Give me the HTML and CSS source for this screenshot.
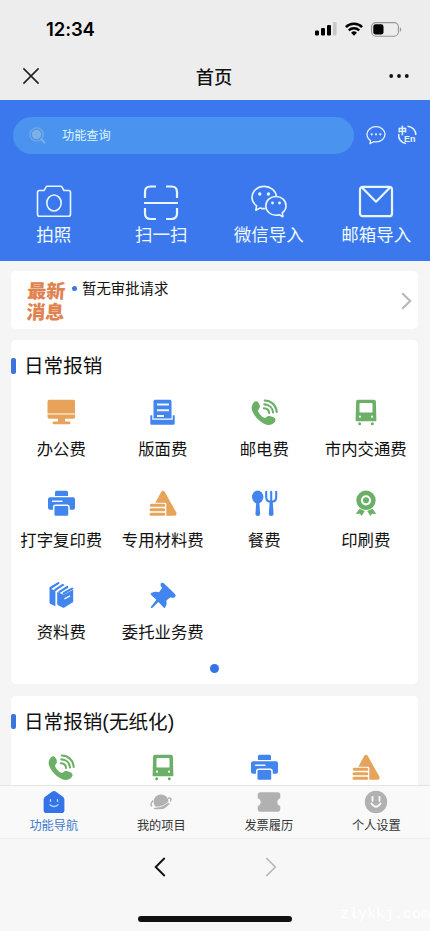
FILE: index.html
```html
<!DOCTYPE html>
<html lang="zh-CN">
<head>
<meta charset="utf-8">
<meta name="viewport" content="width=device-width, initial-scale=1">
<title>首页</title>
<link rel="stylesheet" href="styles.css">
</head>
<body>
<svg class="sprite" aria-hidden="true">
  <symbol id="monitor" viewBox="0 0 28 28"><path d="M2.500.7h23.700q2 0 2 2v11.800H.5V2.700q0-2 2-2zM.5 15.600h27.700v2.200q0 2-2 2h-8.200v2.800h4q1.500 0 1.500 1.300T22 25.200H7q-1.500 0-1.500-1.300T7 22.600h4v-2.800H2.500q-2 0-2-2z"/></symbol>
  <symbol id="document" viewBox="0 0 28 28"><path d="M5.500.7h15.500q1.500 0 1.500 1.500v17.300h-18V2.200q0-1.500 1-1.500z"/><path d="M1.300 16.300h2v4.400h20.400v-4.400h2v8.200q0 1.300-1.300 1.300H2.600q-1.300 0-1.300-1.300z"/><path class="cut" d="M8 5.600h12M8 11.200h12M8 17h7"/></symbol>
  <symbol id="phone" viewBox="0 0 28 28"><path d="M3.300 4.200C4.700 2.100 7 1.700 8.300 3.400c1.500 2 2.100 4.300 1.200 5.800-.6 1-1.600 1.500-1.400 2.700.5 2.400 4 6.200 6.400 7 1.300.4 1.800-.9 3.100-1.600 2-1 5.200.3 7 1.800 1.500 1.200 1.100 3-.2 4.400-2.400 2.600-6.100 3.200-10.200 1.200C8.700 22 3.900 16.800 2 11.300 1.200 8.700 1.800 6.200 3.300 4.200z"/><path class="wave" d="M14.700 1.500c6.300 0 11.500 4.500 12 11.500M14.300 5.400c4.800.1 8.300 3.300 8.700 8M13.900 9.300c3 .2 5 1.900 5.200 4.700"/></symbol>
  <symbol id="tram" viewBox="0 0 28 28"><path fill-rule="evenodd" d="M6 .7h16q1.800 0 1.900 2l.5 18.800q0 .7-.7.7H4.300q-.7 0-.7-.7L4.100 2.700Q4.200.7 6 .7zM8.200 4q-.7 0-.7.700v8.200q0 .7.700.7h11.600q.7 0 .7-.7V4.700q0-.7-.7-.7zM8 16.600a1.100 1.100 0 1 0 0 2.200 1.100 1.100 0 0 0 0-2.200zM20 16.600a1.100 1.100 0 1 0 0 2.200 1.100 1.100 0 0 0 0-2.200z"/><circle cx="7.700" cy="24.700" r="1.500"/><circle cx="20.300" cy="24.700" r="1.500"/></symbol>
  <symbol id="printer" viewBox="0 0 28 28"><path d="M9.500.7h10q1.500 0 1.500 1.500v3.900H8V2.200Q8 .7 9.500.7zM3 7.200h23q2 0 2 2v8.600q0 2-2 2H3q-2 0-2-2V9.200q0-2 2-2z"/><path class="cut thin" d="M5.500 11.200h9.500"/><rect class="outline" x="6.700" y="15.300" width="15.300" height="11.300" rx="2"/></symbol>
  <symbol id="materials" viewBox="0 0 28 28"><path d="M12.300 1.800q1.700-2.300 3.400 0L27.300 22.600q1 3.200-1.700 3.200H17.300V14q0-1.300-1.200-1.300H6.300z"/><path class="plain" d="M2.300 15.300h12.500M2 19.800h12.800M2 24.300h12.800"/></symbol>
  <symbol id="cutlery" viewBox="0 0 28 28"><ellipse cx="7.700" cy="7" rx="5.700" ry="6.500"/><path d="M6.300 12h3l.9 12q0 2-2.400 2t-2.400-2z"/><path class="wave" d="M16.200 1.700v5.500q0 4.500 5 4.500t5-4.500V1.700M21.200 1.700v10"/><path d="M19.700 11h3l.9 13q0 2-2.400 2t-2.400-2z"/></symbol>
  <symbol id="medal" viewBox="0 0 28 28"><circle class="ring" cx="14" cy="10.300" r="7.400"/><circle cx="14" cy="10.300" r="3"/><path d="m7.500 18.700 5.300 2.300-3.200 5-1.600-2.300-4.300.4zM20.500 18.700 15.200 21l3.200 5 1.600-2.300 4.300.4z"/></symbol>
  <symbol id="books" viewBox="0 0 28 28"><path d="m2.500 6.300 5.900 2.500v15.400L3.500 22q-1-.5-1-1.500z"/><path d="M10.200 9.900 15.500 12.200q1 .4 2 0l8.700-4.500V20l-8.800 5.400q-1 .5-2 .1l-4.300-2.200q-.9-.4-.9-1.400z"/><path class="plain slim" d="m3.500 6 7.800-4.900M8.300 7.800l7.500-4.900M12.500 9.900l7.800-4.900M16.700 11.300l8.400-4.700"/><path class="cut thin" d="m17.800 16.600 4.800-2.500"/></symbol>
  <symbol id="pin" viewBox="0 0 28 28"><path d="M11.700 1.500q1.800-1.500 3.400 0L26 11.900q1.500 2-.1 3.300-1.800 1.200-4.500.1l-4 3.300q1 3.900-1.200 7-.7.700-1.600-.2l-5.200-5.300-6 5.700q-1.500.8-1.700-.8l5.700-7.300-5.300-4.800q-.8-1.100.1-1.900 4.300-1.900 7.800-.8l3-4.300q-2.200-2.600-1.300-4.400z"/></symbol>
</svg>
<div class="phone">
  <header class="top">
    <div class="status">
      <span class="time">12:34</span>
      <span class="indicators">
        <svg width="22" height="14" viewBox="0 0 22 14"><rect x="0" y="8.500" width="4" height="5" rx="1.200"/><rect x="6" y="6" width="4" height="7.500" rx="1.200"/><rect x="12" y="3" width="4" height="10.500" rx="1.200"/><rect x="18" y="0" width="3.600" height="13.500" rx="1.200" fill="#c8c8c8"/></svg>
        <svg width="18" height="14" viewBox="0 0 18 14" fill="none" stroke="#000" stroke-width="2.500"><path d="M.9 5.200a11.500 11.500 0 0 1 16.200 0M3.800 8.300a7.400 7.400 0 0 1 10.400 0"/><path d="M6.100 10.800a4.100 4.100 0 0 1 5.800 0L9 13.700z" fill="#000" stroke="none"/></svg>
        <svg width="31" height="15" viewBox="0 0 31 15"><rect x=".6" y=".6" width="26.800" height="13.600" rx="4.200" fill="none" stroke="#969696" stroke-width="1.100"/><rect x="2.300" y="2.300" width="10.200" height="10.200" rx="2.300"/><path d="M28.800 5v5q1.400-.8 1.400-2.500T28.800 5z" fill="#999"/></svg>
      </span>
    </div>
    <div class="nav">
      <svg width="16" height="16" viewBox="0 0 16 16" fill="none" stroke="#222" stroke-width="1.600" stroke-linecap="round"><path d="m.9.9 14.200 14.200M15.100.9.900 15.100"/></svg>
      <h1>首页</h1>
      <svg width="20" height="4" viewBox="0 0 20 4" fill="#111"><circle cx="2.200" cy="2" r="1.900"/><circle cx="10" cy="2" r="1.900"/><circle cx="17.800" cy="2" r="1.900"/></svg>
    </div>
  </header>

  <section class="hero">
    <div class="search-row">
      <div class="search">
        <svg width="17" height="17" viewBox="0 0 17 17"><circle cx="7.500" cy="7.500" r="6.600" fill="none" stroke="#6ea7e9" stroke-width="1.400"/><circle cx="7.500" cy="7.500" r="4.700" fill="#80b1e5"/><path d="m12.500 12.500 3 3" stroke="#80b1e5" stroke-width="1.800" stroke-linecap="round"/></svg>
        <span>功能查询</span>
      </div>
      <svg class="chat" width="20" height="20" viewBox="0 0 20 20" fill="none" stroke="#e4f4ff" stroke-width="1.300"><path d="M4.500 15.500C2.200 14 1 11.800 1 9.300 1 5 5 1.700 10 1.700s9 3.300 9 7.600-4 7.600-9 7.600q-1.300 0-2.400-.2L4 18.600z" stroke-linejoin="round"/><g fill="#e4f4ff" stroke="none"><circle cx="5.700" cy="9.300" r="1.100"/><circle cx="10" cy="9.300" r="1.100"/><circle cx="14.300" cy="9.300" r="1.100"/></g></svg>
      <svg class="lang" width="20" height="20" viewBox="0 0 20 20"><path d="M10.500 1.200c5 .3 8.500 4.200 8.300 8.800M1.700 9c-.6 4.600 2.300 8.900 7.300 9.500" fill="none" stroke="#e4f4ff" stroke-width="1.500"/><text x=".8" y="8.600" font-size="9" font-weight="900">中</text><text class="en" x="7" y="17.300" font-size="9" font-weight="700">En</text></svg>
    </div>
    <div class="actions">
      <div class="action"><svg width="36" height="36" viewBox="0 0 36 36"><path d="M3.500 5.500H8l2.200-3.700q.4-.6 1.200-.6h13.200q.8 0 1.200.6L28 5.500h4.500q2 0 2 2v21.800q0 2-2 2h-29q-2 0-2-2V7.500q0-2 2-2z"/><ellipse cx="18" cy="18" rx="7.200" ry="8"/></svg><span>拍照</span></div>
      <div class="action"><svg class="scan" width="36" height="36" viewBox="0 0 36 36"><path d="M2 13V7q0-5.500 5.500-5.500H13M23 1.500h5.500Q34 1.500 34 7v6M2 23v5.500Q2 34 7.500 34H13M23 34h5.500q5.500 0 5.500-5.500V23M1 18h34"/></svg><span>扫一扫</span></div>
      <div class="action"><svg width="36" height="36" viewBox="0 0 36 36"><path d="M14.500 23.600q-2.900.3-5.200-.7L4.800 25.200l.8-4.400C2.700 18.700 1 16 1 12.800 1 6.300 6.300 1.400 13.300 1.400c6.200 0 11.200 4 12.100 9.800"/><path d="M25 11.500c5.700 0 10 4.100 10 9.200 0 3.100-1.300 5.400-3.700 7l.6 4-3.600-1.900q-1.600.5-3.300.5c-5.700 0-10.200-4.200-10.200-9.500s4.500-9.300 10.200-9.300z"/><g class="eyes"><circle cx="8.800" cy="9" r="1.700"/><circle cx="17.400" cy="9" r="1.700"/><circle cx="21.500" cy="18" r="1.400"/><circle cx="28.500" cy="18" r="1.400"/></g></svg><span>微信导入</span></div>
      <div class="action"><svg class="mail" width="36" height="36" viewBox="0 0 36 36"><rect x="2" y="1.800" width="32" height="29.400" rx="2.800"/><path d="m4 2.500 14 14.200L32 2.500"/></svg><span>邮箱导入</span></div>
    </div>
  </section>

  <main class="content">
    <section class="card news">
      <div class="badge">最新<br>消息</div>
      <i class="bullet"></i>
      <p>暂无审批请求</p>
      <svg class="more" width="11" height="18" viewBox="0 0 11 18" fill="none" stroke="#b9b9b9" stroke-width="2.200"><path d="m1.200 1.200 8 7.800-8 7.800"/></svg>
    </section>

    <section class="card daily">
      <h2>日常报销</h2>
      <div class="grid">
        <div class="item orange"><svg><use href="#monitor"/></svg><span>办公费</span></div>
        <div class="item blue"><svg><use href="#document"/></svg><span>版面费</span></div>
        <div class="item green"><svg><use href="#phone"/></svg><span>邮电费</span></div>
        <div class="item green"><svg><use href="#tram"/></svg><span>市内交通费</span></div>
        <div class="item blue"><svg><use href="#printer"/></svg><span>打字复印费</span></div>
        <div class="item orange"><svg><use href="#materials"/></svg><span>专用材料费</span></div>
        <div class="item blue"><svg><use href="#cutlery"/></svg><span>餐费</span></div>
        <div class="item green"><svg><use href="#medal"/></svg><span>印刷费</span></div>
        <div class="item blue"><svg><use href="#books"/></svg><span>资料费</span></div>
        <div class="item blue"><svg><use href="#pin"/></svg><span>委托业务费</span></div>
      </div>
      <i class="page-dot"></i>
    </section>

    <section class="card paperless">
      <h2>日常报销(无纸化)</h2>
      <div class="grid">
        <div class="item green"><svg><use href="#phone"/></svg></div>
        <div class="item green"><svg><use href="#tram"/></svg></div>
        <div class="item blue"><svg><use href="#printer"/></svg></div>
        <div class="item orange"><svg><use href="#materials"/></svg></div>
      </div>
    </section>
  </main>

  <nav class="tabs">
    <div class="tab active"><svg width="24" height="24" viewBox="0 0 24 24"><path d="M10.300 1.500q1.700-1.200 3.400 0l7.200 5.300q1.500 1.100 1.500 2.800v10.600q0 2.800-2.800 2.800H4.400q-2.800 0-2.800-2.800V9.600q0-1.700 1.500-2.800z" fill="#3474e8"/><path d="M8.500 9.700v1.700M15.500 9.700v1.700M8 14.700q4 3.800 8 0" fill="none" stroke="#a9dcff" stroke-width="1.400" stroke-linecap="round"/></svg><span>功能导航</span></div>
    <div class="tab"><svg width="24" height="24" viewBox="0 0 24 24" fill="#b1b1b1"><circle cx="12" cy="11.800" r="7.400"/><path d="M4.200 10.500c-3 3-2.700 5.200-1 5.600M18.800 8.300c3-.8 3.900.5 2.500 3M5 18.200c6 1.300 12-1.500 15.300-4.700" fill="none" stroke="#b1b1b1" stroke-width="1.500"/><path d="M4.500 16.800c6 1.200 11.500-1.500 15.200-5" fill="none" stroke="#f9f9f9" stroke-width=".8"/></svg><span>我的项目</span></div>
    <div class="tab"><svg width="24" height="24" viewBox="0 0 24 24" fill="#b1b1b1"><path d="M3.500 2.300h17q2.800 0 2.800 2.800v3.200q-3 1.200-3 3.900t3 3.900v2.800q0 2.800-2.800 2.800h-17q-2.800 0-2.800-2.800v-2.800q3-1.200 3-3.900t-3-3.900V5.100q0-2.800 2.800-2.800z"/></svg><span>发票履历</span></div>
    <div class="tab"><svg width="24" height="24" viewBox="0 0 24 24"><circle cx="12" cy="12" r="11.200" fill="#b1b1b1"/><path d="M8.500 7v3.800M15.500 7v3.800M7.500 13.500q4.500 6.500 9 0" fill="none" stroke="#f9f9f9" stroke-width="1.900" stroke-linecap="round"/></svg><span>个人设置</span></div>
  </nav>

  <footer class="browser-bar">
    <div class="history">
      <svg width="12" height="20" viewBox="0 0 12 20" fill="none" stroke="#111" stroke-width="1.900"><path d="m10.700 1-9 9 9 9"/></svg>
      <svg width="12" height="20" viewBox="0 0 12 20" fill="none" stroke="#b5b5b5" stroke-width="1.600"><path d="m1.300 1 9 9-9 9"/></svg>
    </div>
    <div class="home-bar"></div>
    <span class="watermark">zlykkj.com</span>
  </footer>
</div>
</body>
</html>
```
FILE: styles.css
```css
* { box-sizing: border-box; }
body {
  margin: 0;
  background: #f5f5f5;
  color: #111;
  font-family: "Liberation Sans", "Noto Sans CJK SC", sans-serif;
}
svg { display: block; flex: none; }
h1, h2, p { margin: 0; font-weight: 400; }
.sprite { position: absolute; width: 0; height: 0; }
.phone { display: flex; flex-direction: column; width: 430px; height: 931px; overflow: hidden; }

.top { height: 100px; background: #ededed; flex: none; }
.status { display: flex; justify-content: space-between; align-items: center; height: 52px; padding: 6px 28px 0 46px; }
.time { font: 600 18.500px/20px Inter, sans-serif; color: #000; letter-spacing: -0.1px; }
.indicators { display: flex; align-items: center; gap: 8px; }
.nav { display: flex; justify-content: space-between; align-items: center; height: 48px; padding: 0 21px 0 23px; }
.nav h1 { font: 500 18.300px/26px "Noto Sans CJK SC", sans-serif; }

.hero { height: 160.500px; flex: none; background: #3c78ed; padding-top: 17px; color: #eefaff; }
.search-row { display: flex; align-items: center; padding: 0 13px; height: 36.500px; }
.search { display: flex; align-items: center; width: 342px; height: 36.500px; padding-left: 16px; border-radius: 18.500px; background: #4a94f0; font-size: 12.200px; }
.search span { margin-left: 16px; color: #dff5ff; }
.chat { margin-left: 12px; }
.lang { margin-left: 11px; fill: #e4f4ff; font-family: "Noto Sans CJK SC", sans-serif; }
.lang .en { font-family: "Liberation Sans", sans-serif; }
.actions { display: grid; grid-template-columns: repeat(4, 1fr); margin-top: 31.500px; }
.action { display: flex; flex-direction: column; align-items: center; font-size: 17.500px; line-height: 24px; }
.action svg { fill: none; stroke: #e8f6ff; stroke-width: 1.600; stroke-linejoin: round; }
.action .scan, .action .mail { stroke-width: 2.200; }
.action .eyes { fill: #e8f6ff; stroke: none; }
.action span { margin-top: 1.500px; }

.content { flex: none; height: 524.500px; padding: 10.500px 12px 0 11px; overflow: hidden; }
.card { background: #fff; border-radius: 5px; }
.news { display: flex; height: 57.500px; padding: 6px 6px 0 16px; margin-bottom: 11.500px; }
.badge { font: 900 19px/20.500px "Noto Sans CJK SC", sans-serif; color: #e0824f; transform: skewX(-3deg); width: 39px; height: 46px; padding-top: 3px; }
.bullet { width: 5px; height: 5px; margin: 9px 5px 0 6px; border-radius: 50%; background: #3c78dc; }
.news p { font-size: 14.400px; line-height: 21px; padding-top: 1.500px; }
.more { margin: 15px 0 0 auto; }
.daily { height: 344px; margin-bottom: 11.500px; }
.paperless { height: 260px; }
.card h2 { display: flex; align-items: center; height: 52px; font-size: 19.600px; line-height: 28px; }
.card h2::before { content: ""; width: 4.500px; height: 15.500px; margin-right: 8.500px; border-radius: 2px; background: #3b74dc; }
.grid { display: grid; grid-template-columns: repeat(4, 101.500px); grid-auto-rows: 91.500px; margin: 6.500px 0 0 -0.500px; }
.item { display: flex; flex-direction: column; align-items: center; font-size: 16.400px; line-height: 24px; white-space: nowrap; }
.item svg { width: 28px; height: 28px; fill: currentColor; }
.item span { margin-top: 10px; color: #111; }
.orange { color: #e7a35a; }
.blue { color: #4285ee; }
.green { color: #6bb066; }
.cut { fill: none; stroke: #f1f8ff; stroke-width: 2; }
.thin { stroke-width: 1.400; stroke-linecap: round; }
.wave { fill: none; stroke: currentColor; stroke-width: 2.100; stroke-linecap: round; }
.ring { fill: none; stroke: currentColor; stroke-width: 4.600; }
.plain { fill: none; stroke: currentColor; stroke-width: 3; stroke-linecap: round; }
.slim { stroke-width: 2.200; }
.outline { stroke: #fff; stroke-width: 1.500; }
.page-dot { display: block; width: 9px; height: 9px; margin: -9px auto 0; border-radius: 50%; background: #3474e8; }

.tabs { display: grid; grid-template-columns: repeat(4, 1fr); flex: none; height: 54px; background: #f9f9f9; border-top: 1px solid #e4e4e4; border-bottom: 1px solid #eee; }
.tab { display: flex; flex-direction: column; align-items: center; padding-top: 4px; font-size: 12.200px; line-height: 18px; color: #333; }
.tab span { margin-top: 3px; }
.tab.active { color: #3f79cd; }

.browser-bar { position: relative; flex: 1; background: #f7f7f7; padding-top: 17.500px; }
.history { display: flex; justify-content: center; gap: 99px; }
.home-bar { width: 154px; height: 5.500px; margin: 39.500px auto 0; border-radius: 3px; background: #111; }
.watermark { position: absolute; right: 0; bottom: 6px; color: #fff; font: 15px/20px "Liberation Mono", monospace; }
```
